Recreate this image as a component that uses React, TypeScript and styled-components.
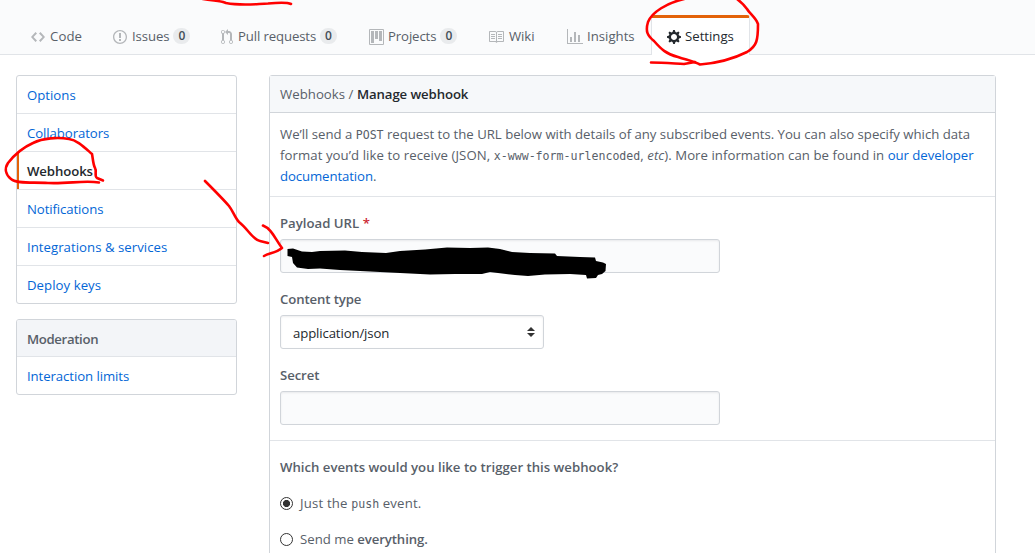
import React from "react";
import styled, { createGlobalStyle } from "styled-components";

const Global = createGlobalStyle`
  * { box-sizing: border-box; }
  html, body { margin: 0; background: #fff; }
  body {
    overflow: hidden;
    font: 13.2px/21px "Open Sans", "Noto Sans", sans-serif;
    color: #586069;
  }
`;

const Page = styled.div`
  position: relative;
  width: 1035px;
  height: 553px;
  overflow: hidden;
`;

const Text = styled.span<{ $track?: number }>`
  letter-spacing: ${(p) => p.$track ?? 0}px;
  white-space: pre;
`;

const Strong = styled(Text)<{ $dark?: boolean }>`
  font-weight: 600;
  color: ${(p) => (p.$dark ? "#24292e" : "inherit")};
`;

const Nav = styled.nav`
  display: flex;
  align-items: flex-end;
  height: 55px;
  padding-left: 15px;
  background: #fafbfc;
  border-bottom: 1px solid #e1e4e8;
`;

const Tab = styled.a<{ $width: number; $gap?: number; $active?: boolean }>`
  display: flex;
  align-items: center;
  flex: none;
  width: ${(p) => p.$width}px;
  height: 40px;
  margin-bottom: -1px;
  padding: 0 0 1px 15px;
  border: 1px solid transparent;
  border-top-width: 3px;
  border-bottom: 0;
  border-radius: 3px 3px 0 0;
  color: ${(p) => (p.$active ? "#24292e" : "#586069")};
  ${(p) => p.$active && "background:#fff;border-color:#e36209 #e1e4e8 transparent;"}
  svg {
    flex: none;
    margin: 1px ${(p) => p.$gap ?? 4}px 0 0;
    fill: ${(p) => (p.$active ? "#24292e" : "#b4b7ba")};
  }
`;

const Counter = styled.span`
  width: 17px;
  height: 16px;
  margin-left: 4px;
  border-radius: 20px;
  background: #e9ebed;
  color: #444d56;
  font-size: 12px;
  font-weight: 600;
  line-height: 16px;
  text-align: center;
`;

const Columns = styled.div`
  display: grid;
  grid-template-columns: 221px 727px;
  column-gap: 32px;
  align-items: start;
  padding: 20px 0 0 16px;
`;

const Sidebar = styled.aside`
  display: flex;
  flex-direction: column;
  gap: 15px;
`;

const Menu = styled.div`
  border: 1px solid #d1d5da;
  border-radius: 3px;
  overflow: hidden;
`;

const MenuItem = styled.a<{ $selected?: boolean }>`
  display: block;
  height: 38px;
  padding: 9px 10px 0;
  border-bottom: 1px solid #e1e4e8;
  color: ${(p) => (p.$selected ? "#24292e" : "#0366d6")};
  font-weight: ${(p) => (p.$selected ? 600 : 400)};
  box-shadow: ${(p) => (p.$selected ? "inset 2px 0 0 #e36209" : "none")};
  &:last-child { height: 37px; border-bottom: 0; }
`;

const MenuHeading = styled.div`
  height: 37px;
  padding: 9px 10px 0;
  border-bottom: 1px solid #e1e4e8;
  background: #f3f5f8;
  font-weight: 600;
`;

const Panel = styled.main`
  height: 500px;
  border: 1px solid #d1d5da;
  border-radius: 3px;
`;

const PanelHeader = styled.header`
  height: 37px;
  padding: 8px 10px 0;
  border-bottom: 1px solid #d1d5da;
  background: #f6f8fa;
`;

const Intro = styled.p`
  height: 84px;
  margin: 0;
  padding: 11px 10px 0;
  border-bottom: 1px solid #e1e4e8;
`;

const Link = styled(Text)`
  color: #0366d6;
`;

const Code = styled.code`
  font: 11.6px/1 "DejaVu Sans Mono", monospace;
  letter-spacing: 0;
`;

const Fields = styled.section`
  height: 244px;
  padding: 16px 10px 0;
  border-bottom: 1px solid #e1e4e8;
`;

const Field = styled.div`
  height: 76px;
`;

const Label = styled.label`
  display: block;
  height: 26px;
  font-weight: 600;
`;

const Required = styled.span`
  color: #cb2431;
`;

const Input = styled.div`
  width: 440px;
  height: 34px;
  border: 1px solid #d1d5da;
  border-radius: 3px;
  background: #fafbfc;
  box-shadow: inset 0 1px 2px rgba(27, 31, 35, 0.075);
`;

const Select = styled(Input)`
  display: flex;
  align-items: center;
  justify-content: space-between;
  width: 264px;
  padding: 2px 8px 0 12px;
  background: #fff;
  color: #24292e;
  svg { margin-top: -3px; }
`;

const Events = styled.section`
  padding: 16px 10px 0;
`;

const Question = styled.div`
  height: 36px;
`;

const Option = styled.label`
  display: flex;
  align-items: center;
  height: 21px;
  margin-bottom: 15px;
`;

const Radio = styled.span<{ $checked?: boolean }>`
  width: 13px;
  height: 13px;
  margin: 0 7px 1px 0;
  border: 1px solid #333;
  border-radius: 50%;
  background: ${(p) =>
    p.$checked ? "radial-gradient(circle, #333 3.2px, #fff 3.9px)" : "#fff"};
`;

const Ink = styled.svg`
  position: absolute;
  inset: 0;
  pointer-events: none;
`;

const icons = {
  code: { w: 14, d: "M9.5 3L8 4.5 11.5 8 8 11.5 9.5 13 14 8 9.5 3zm-5 0L0 8l4.5 5L6 11.5 2.5 8 6 4.5 4.5 3z" },
  issue: { w: 14, d: "M7 2.3c3.14 0 5.7 2.56 5.7 5.7s-2.56 5.7-5.7 5.7A5.71 5.71 0 0 1 1.3 8c0-3.14 2.56-5.7 5.7-5.7zM7 1C3.14 1 0 4.14 0 8s3.14 7 7 7 7-3.14 7-7-3.14-7-7-7zm1 3H6v5h2V4zm0 6H6v2h2v-2z" },
  pull: { w: 12, d: "M11 11.28V5c-.03-.78-.34-1.47-.94-2.06C9.46 2.35 8.78 2.03 8 2H7V0L4 3l3 3V4h1c.27.02.48.11.69.31.21.2.3.42.31.69v6.28A1.993 1.993 0 0 0 10 15a1.993 1.993 0 0 0 1-3.72zm-1 2.92c-.66 0-1.2-.55-1.2-1.2 0-.65.55-1.2 1.2-1.2.65 0 1.2.55 1.2 1.2 0 .65-.55 1.2-1.2 1.2zM4 3c0-1.11-.89-2-2-2a1.993 1.993 0 0 0-1 3.72v6.56A1.993 1.993 0 0 0 2 15a1.993 1.993 0 0 0 1-3.72V4.72c.59-.34 1-.98 1-1.72zm-.8 10c0 .66-.55 1.2-1.2 1.2-.65 0-1.2-.55-1.2-1.2 0-.65.55-1.2 1.2-1.2.65 0 1.2.55 1.2 1.2zM2 4.2C1.34 4.2.8 3.65.8 3c0-.65.55-1.2 1.2-1.2.65 0 1.2.55 1.2 1.2 0 .65-.55 1.2-1.2 1.2z" },
  project: { w: 15, d: "M10 12h3V2h-3v10zm-4-2h3V2H6v8zm-4 4h3V2H2v12zm-1 1h13V1H1v14zM14 0H1a1 1 0 0 0-1 1v14a1 1 0 0 0 1 1h13a1 1 0 0 0 1-1V1a1 1 0 0 0-1-1z" },
  book: { w: 16, d: "M3 5h4v1H3V5zm0 3h4V7H3v1zm0 2h4V9H3v1zm11-5h-4v1h4V5zm0 2h-4v1h4V7zm0 2h-4v1h4V9zm2-6v9c0 .55-.45 1-1 1H9.5l-1 1-1-1H2c-.55 0-1-.45-1-1V3c0-.55.45-1 1-1h5.5l1 1 1-1H15c.55 0 1 .45 1 1zm-8 .5L7.5 3H2v9h6V3.5zm7-.5H9.5l-.5.5V12h6V3z" },
  graph: { w: 16, d: "M16 14v1H0V0h1v14h15zM5 13H3V8h2v5zm4 0H7V3h2v10zm4 0h-2V6h2v7z" },
  gear: { w: 14, d: "M14 8.77v-1.6l-1.94-.64-.45-1.09.88-1.84-1.13-1.13-1.81.91-1.09-.45-.69-1.92h-1.6l-.63 1.94-1.11.45-1.84-.88-1.13 1.13.91 1.81-.45 1.09L0 7.23v1.59l1.94.64.45 1.09-.88 1.84 1.13 1.13 1.81-.91 1.09.45.69 1.92h1.59l.63-1.94 1.11-.45 1.84.88 1.13-1.13-.92-1.81.47-1.09L14 8.75v.02zM7 11c-1.66 0-3-1.34-3-3s1.34-3 3-3 3 1.34 3 3-1.34 3-3 3z" },
};

const Icon = ({ name }: { name: keyof typeof icons }) => (
  <svg width={icons[name].w} height={16} viewBox={`0 0 ${icons[name].w} 16`}>
    <path fillRule="evenodd" d={icons[name].d} />
  </svg>
);

type TabData = {
  label: string;
  icon: keyof typeof icons;
  width: number;
  gap?: number;
  track?: number;
  count?: number;
  active?: boolean;
};

const tabs: TabData[] = [
  { label: "Code", icon: "code", width: 82, gap: 5, track: 0.1 },
  { label: "Issues", icon: "issue", width: 108, gap: 5, track: -0.1, count: 0 },
  { label: "Pull requests", icon: "pull", width: 148, gap: 5, track: -0.13, count: 0 },
  { label: "Projects", icon: "project", width: 119, track: -0.12, count: 0 },
  { label: "Wiki", icon: "book", width: 79, gap: 5, track: -0.1 },
  { label: "Insights", icon: "graph", width: 100 },
  { label: "Settings", icon: "gear", width: 99, active: true },
];

const menu: { label: string; track?: number; selected?: boolean }[] = [
  { label: "Options" },
  { label: "Collaborators", track: -0.08 },
  { label: "Webhooks", track: -0.1, selected: true },
  { label: "Notifications", track: -0.1 },
  { label: "Integrations & services", track: 0.03 },
  { label: "Deploy keys", track: 0.05 },
];

export default function App() {
  return (
    <>
      <Global />
      <Page>
        <Nav>
          {tabs.map((t) => (
            <Tab key={t.label} $width={t.width} $gap={t.gap} $active={t.active}>
              <Icon name={t.icon} />
              <Text $track={t.track}>{t.label}</Text>
              {t.count !== undefined && <Counter>{t.count}</Counter>}
            </Tab>
          ))}
        </Nav>
        <Columns>
          <Sidebar>
            <Menu>
              {menu.map((m) => (
                <MenuItem key={m.label} $selected={m.selected}>
                  <Text $track={m.track}>{m.label}</Text>
                </MenuItem>
              ))}
            </Menu>
            <Menu>
              <MenuHeading><Text $track={-0.35}>Moderation</Text></MenuHeading>
              <MenuItem><Text $track={-0.08}>Interaction limits</Text></MenuItem>
            </Menu>
          </Sidebar>
          <Panel>
            <PanelHeader>
              <Text $track={0.04}>Webhooks / </Text>
              <Strong $dark $track={-0.1}>Manage webhook</Strong>
            </PanelHeader>
            <Intro>
              <Text $track={-0.02}>We’ll send a <Code>POST</Code> request to the URL below with details of any subscribed events. You can also specify which data</Text>
              <br />
              <Text $track={0.07}>format you’d like to receive (JSON, <Code>x-www-form-urlencoded</Code>, </Text>
              <Text $track={0.04}><em>etc</em>). More information can be found in </Text>
              <Link $track={-0.05}>our developer</Link>
              <br />
              <Link $track={-0.1}>documentation</Link>.
            </Intro>
            <Fields>
              <Field>
                <Label><Text>Payload URL </Text><Required>*</Required></Label>
                <Input />
              </Field>
              <Field>
                <Label><Text $track={-0.12}>Content type</Text></Label>
                <Select>
                  <Text $track={-0.13}>application/json</Text>
                  <svg width="8" height="10" viewBox="0 0 8 10" fill="#333">
                    <path d="M4 0L8 4H0zM0 6h8L4 10z" />
                  </svg>
                </Select>
              </Field>
              <Field>
                <Label><Text $track={-0.1}>Secret</Text></Label>
                <Input />
              </Field>
            </Fields>
            <Events>
              <Question><Strong>Which events would you like to trigger this webhook?</Strong></Question>
              <Option>
                <Radio $checked />
                <Text $track={0.17}>Just the <Code>push</Code> event.</Text>
              </Option>
              <Option>
                <Radio />
                <Text>Send me </Text><Strong $track={-0.1}>everything.</Strong>
              </Option>
            </Events>
          </Panel>
        </Columns>
        <Ink width="1035" height="553" viewBox="0 0 1035 553" fill="none">
          <path
            fill="#000"
            d="M287.5 249L293 248.5 302 251.5 312 252 320 251 345 250.500 362 252 386 253 400 251 425 249.500 447 247.500 470 248 488 247.500 500 249 512 252 530 253 555 253.500 557 256 580 257 595 257.500 596 261 603 262.500 606 264 605.500 271 602 274 598 275 596 278 587 278.500 586 275 570 274 545 274.500 528 276 515 275 490 272 482 274 455 274 430 274.500 400 273 370 271.500 340 270 320 268.500 308 269 297 267.500 293 263 292 257 287.500 256z"
          />
          <g stroke="#f00" strokeWidth="2.6" strokeLinecap="round" strokeLinejoin="round">
            <path d="M203 -1C213 1 220 .5 226 3C242 6 255 4 268 3.500C278 2.500 287 2 291 4" />
            <path d="M684 -1C667 3 652 12 648 22C645 32 648 36 654 41C661 49 666 54 678 57C687 60 694 61.500 700 64.500C719 63 735 58 747 52C757 46 758 40 758 24C756 18 750 14 747 9C744 5 741 2 737 -1" />
            <path d="M651 62.500C663 62.500 674 63.500 684 64L695 62" />
            <path d="M103 180.500L97 178C94 176 97 171 95 168C93 164 93 159 92 154C84 147 77 140 69 139C58 137 43 138 33 143C24 147 15 154 8 163C4 169 6 175 11 179C17 184 32 182 48 183C68 184 84 180 99 182.500" />
            <path d="M205 181C216 192 223 199 229 206C233 211 235 218 239 222C248 229 253 240 260 241L268 243" />
            <path d="M263 225.500C272 229 275 239 282 248C276 253 269 253 264 256" />
          </g>
        </Ink>
      </Page>
    </>
  );
}
